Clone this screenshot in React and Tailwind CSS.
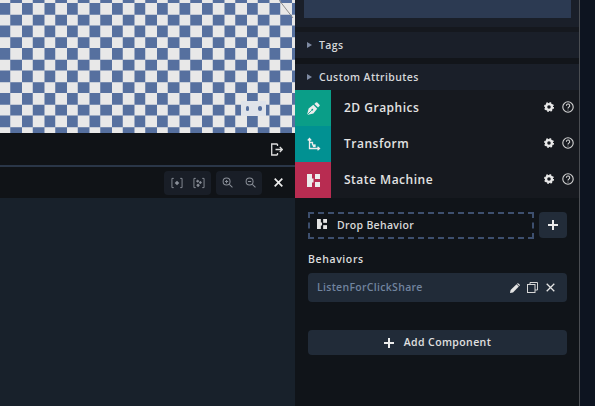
const font = { fontFamily: '"Open Sans","Noto Sans",sans-serif' };

function Gear() {
  return (
    <svg width="10" height="10" viewBox="0 0 24 24" fill="none">
      <circle cx="12" cy="12" r="7" stroke="#e8e8e8" strokeWidth="5.500" />
      <circle cx="12" cy="12" r="10" stroke="#e8e8e8" strokeWidth="4" strokeDasharray="3.9 3.95" />
    </svg>
  );
}

function Help() {
  return (
    <svg width="12" height="12" viewBox="0 0 24 24" fill="none" stroke="#d4d4d4" strokeWidth="2.2">
      <circle cx="12" cy="12" r="10.4" />
      <path d="M8.8 9.4a3.3 3.3 0 1 1 4.9 2.8c-1.1.7-1.7 1.3-1.7 2.6" />
      <circle cx="12" cy="18" r="1" fill="#d4d4d4" stroke="none" />
    </svg>
  );
}

function StateIcon({ w = 13, color = "#ececec" }) {
  return (
    <svg width={w} height={w} viewBox="0 0 13 13" fill={color}>
      <path d="M0 0h5v4.500h1.500v4H5V13H0z" />
      <rect x="8" y="0" width="5" height="5" />
      <rect x="8" y="8" width="5" height="5" />
    </svg>
  );
}

function Row({ color, icon, label }) {
  return (
    <div className="flex h-9 items-center bg-[#16191f]">
      <div className={`flex h-9 w-9 items-center justify-center ${color}`}>{icon}</div>
      <span className="ml-[13px] flex-1 text-[12px] font-semibold tracking-[0.5px] text-[#e3e3e3]">{label}</span>
      <div className="flex items-center gap-[8px] pb-[2px] pr-[5px]">
        <Gear />
        <Help />
      </div>
    </div>
  );
}

function Section({ label }) {
  return (
    <div className="flex h-[26px] items-center gap-[7px] bg-[#1a1f29] pl-3">
      <div className="h-0 w-0 border-y-[3.5px] border-l-[5px] border-y-transparent border-l-[#7f8ba3]" />
      <span className="pt-[1px] text-[10.5px] font-semibold tracking-[0.4px] text-[#d5d7da]">{label}</span>
    </div>
  );
}

export default function App() {
  return (
    <div style={font} className="flex h-[406px] w-[595px] overflow-hidden bg-[#0d1420]">
      <div className="flex w-[295px] flex-col">
        <div className="relative h-[133px] bg-[#e8e8e8] bg-[conic-gradient(#56709f_25%,#e8e8e8_0_50%,#56709f_0_75%,#e8e8e8_0)] bg-[length:22.5px_22.5px] bg-[position:-12.25px_3px]">
          <div className="absolute left-[241px] top-[101px] h-[15px] w-[25px] bg-[#dfe3ea]" />
          <div className="absolute left-[246px] top-[106px] h-[5px] w-[3px] rounded-full bg-[#56709f]" />
          <div className="absolute left-[258px] top-[106px] h-[5px] w-[4px] rounded-full bg-[#56709f]" />
          <svg className="absolute right-0 top-0" width="16" height="20">
            <path d="M0 0 L14 18" stroke="#8d8d8d" strokeWidth="1" />
          </svg>
        </div>
        <div className="flex h-[32px] items-center justify-end bg-[#101317] pr-[12px]">
          <svg width="12" height="13" viewBox="0 0 12 13" fill="none" stroke="#dedede" strokeWidth="1.3">
            <path d="M6.500 1H.7v11h5.800M6.500 1v2M6.500 12v-2" />
            <path d="M4.500 6.500h6.800M8.800 4l2.500 2.500L8.800 9" />
          </svg>
        </div>
        <div className="h-[2px] bg-[#2a3648]" />
        <div className="flex h-[31px] items-center justify-end bg-[#101317] pr-[12px]">
          <div className="flex h-6 w-[47px] items-center justify-center gap-[10px] rounded-sm bg-[#191e27]">
            <svg width="12" height="12" viewBox="0 0 13 12" fill="none" stroke="#8a8f98" strokeWidth="1">
              <path d="M3 1H1v10h2M10 1h2v10h-2" />
              <path d="M6.500 3.500 9 6 6.500 8.500 4 6z" fill="#8a8f98" stroke="none" />
            </svg>
            <svg width="12" height="12" viewBox="0 0 13 12" fill="none" stroke="#8a8f98" strokeWidth="1">
              <path d="M3 1H1v10h2M10 1h2v10h-2" />
              <circle cx="5" cy="4" r="1" fill="#8a8f98" />
              <circle cx="8" cy="5.500" r="1" fill="#8a8f98" />
              <circle cx="5.500" cy="8.500" r="1.200" fill="#8a8f98" />
            </svg>
          </div>
          <div className="ml-[5px] flex h-6 w-[46px] items-center justify-center gap-[12px] rounded-sm bg-[#191e27]">
            <svg width="11" height="11" viewBox="0 0 12 12" fill="none" stroke="#8a8f98" strokeWidth="1.100">
              <circle cx="5" cy="5" r="3.800" />
              <path d="M8 8l3.400 3.400M3.300 5h3.400M5 3.300v3.400" />
            </svg>
            <svg width="11" height="11" viewBox="0 0 12 12" fill="none" stroke="#8a8f98" strokeWidth="1.100">
              <circle cx="5" cy="5" r="3.800" />
              <path d="M8 8l3.400 3.400M3.300 5h3.400" />
            </svg>
          </div>
          <svg className="ml-[12px]" width="9" height="9" viewBox="0 0 9 9" stroke="#ececec" strokeWidth="1.700">
            <path d="M.7.700l7.600 7.600M8.300.700L.7 8.300" />
          </svg>
        </div>
        <div className="flex-1 bg-[#18212b]" />
      </div>

      <div className="flex w-[285px] flex-col border-r border-[#4a4d52] bg-[#101419]">
        <div className="h-[27px] bg-[#1a1f29] pl-[9px] pr-[8px]">
          <div className="h-[18px] bg-[#2c3a52]" />
        </div>
        <div className="h-[5px] bg-[#15181e]" />
        <Section label="Tags" />
        <div className="h-[6px] bg-[#12151a]" />
        <Section label="Custom Attributes" />
        <Row
          color="bg-[#0a9e88]"
          label="2D Graphics"
          icon={
            <svg width="15" height="15" viewBox="0 0 15 15">
              <path d="M1 14 2.600 7.600 7.300 3.800 11.200 7.700 7.400 12.400z" fill="#ececec" />
              <path d="M8.400 3l1.500-1.500a1 1 0 0 1 1.400 0l2.200 2.200a1 1 0 0 1 0 1.400L12 6.600z" fill="#ececec" />
              <path d="M1 14 5.800 9.200" stroke="#0a9e88" strokeWidth="0.800" />
              <circle cx="6.300" cy="8.700" r="0.900" fill="#0a9e88" />
            </svg>
          }
        />
        <Row
          color="bg-[#019192]"
          label="Transform"
          icon={
            <svg width="15" height="15" viewBox="0 0 15 15" fill="none" stroke="#ececec" strokeWidth="1.300">
              <path d="M3.500 2v9.500H13" />
              <path d="M1.800 3.500 3.500 1.500l1.700 2" />
              <path d="M11.500 9.800l2 1.700-2 1.700" />
              <path d="M3.500 5.500h3v3" />
              <rect x="7.500" y="8" width="1.500" height="1.500" fill="#ececec" />
            </svg>
          }
        />
        <Row color="bg-[#b82c51]" label="State Machine" icon={<StateIcon />} />

        <div className="flex flex-1 flex-col pl-[13px] pr-[12px] pt-[14px]">
          <div className="flex gap-[5px]">
            <div className="flex h-[27px] flex-1 items-center gap-[10px] border-2 border-dashed border-[#3d4f6e] pl-[7px]">
              <div className="pb-[3px]">
                <StateIcon w={10} color="#e4e4e4" />
              </div>
              <span className="text-[10.5px] font-semibold tracking-[0.3px] text-[#d8d8d8]">Drop Behavior</span>
            </div>
            <div className="flex h-[26px] w-[28px] items-center justify-center rounded-sm bg-[#222c39]">
              <svg width="10" height="10" viewBox="0 0 10 10" stroke="#ececec" strokeWidth="2">
                <path d="M5 0v10M0 5h10" />
              </svg>
            </div>
          </div>
          <div className="mt-[12px] h-[17px] text-[10.5px] font-semibold leading-[17px] tracking-[0.6px] text-[#dcdcdc]">Behaviors</div>
          <div className="mt-[5px] flex h-[29px] items-center rounded-sm bg-[#212b38] pl-[9px] pr-[12px]">
            <span className="flex-1 text-[10.5px] font-semibold tracking-[0.3px] text-[#71849f]">ListenForClickShare</span>
            <svg width="10" height="10" viewBox="0 0 10 10" fill="#e4e4e4">
              <path d="M0 10l.6-3L6.500 1.200l2.300 2.300L3 9.400z" />
              <path d="M7.300.4a.8.8 0 0 1 1.100 0l1.200 1.200a.8.8 0 0 1 0 1.100l-.4.400-2.300-2.300z" />
            </svg>
            <svg className="ml-[7px]" width="11" height="11" viewBox="0 0 11 11" fill="none" stroke="#d6d6d6" strokeWidth="1">
              <rect x="0.500" y="2.500" width="7.500" height="8" />
              <path d="M3 2.500V.5h7.500v7.500H8" />
            </svg>
            <svg className="ml-[8px]" width="9" height="9" viewBox="0 0 9 9" stroke="#e4e4e4" strokeWidth="1.300">
              <path d="M.7.700l7.600 7.600M8.300.700L.7 8.300" />
            </svg>
          </div>
          <div className="mt-[28px] flex h-[25px] items-center justify-center gap-[10px] rounded-sm bg-[#212b38]">
            <svg width="10" height="10" viewBox="0 0 10 10" stroke="#ececec" strokeWidth="2">
              <path d="M5 0v10M0 5h10" />
            </svg>
            <span className="text-[10.5px] font-semibold tracking-[0.4px] text-[#e0e0e0]">Add Component</span>
          </div>
        </div>
      </div>
      <div className="flex-1 bg-[#0d1420]" />
    </div>
  );
}
